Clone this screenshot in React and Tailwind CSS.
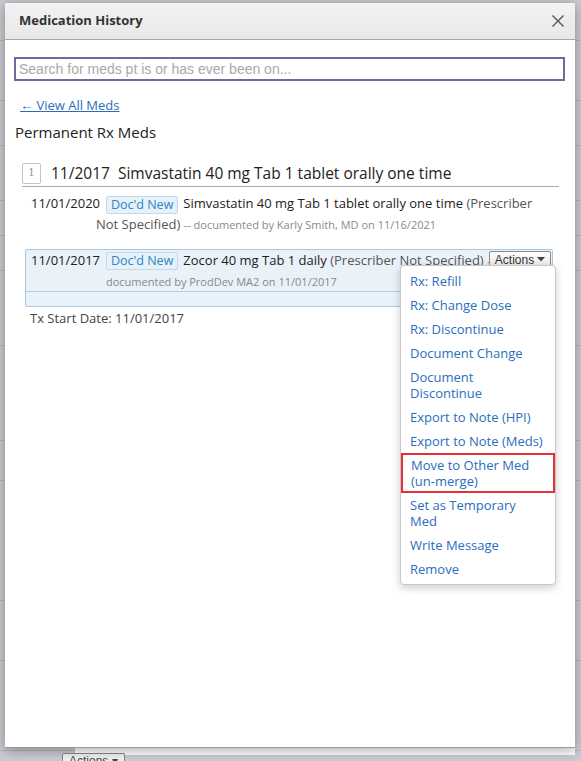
import React from 'react';

const menuItems = [
  'Rx: Refill',
  'Rx: Change Dose',
  'Rx: Discontinue',
  'Document Change',
  'Document Discontinue',
  'Export to Note (HPI)',
  'Export to Note (Meds)',
  'Move to Other Med (un-merge)',
  'Set as Temporary Med',
  'Write Message',
  'Remove',
];

// rows of the page behind the modal (only the edges show)
const bgRows = [38, 60, 45, 55, 35, 35, 75, 95, 40, 120, 60, 90];

const Badge = () => (
  <span className="inline-block align-middle leading-[16px] px-[4px] mr-[5px] text-[12.5px] text-[#2f86c0] bg-[#e6f1fa] border border-[#c3d9ea] rounded-[2px] indent-0">
    Doc&apos;d New
  </span>
);

export default function App() {
  return (
    <div className="relative w-full h-[761px] overflow-hidden bg-[#c9ccd2]" style={{ fontFamily: '"Open Sans", sans-serif' }}>
      {/* page behind the modal */}
      <div className="flex flex-col pt-[3px]">
        {bgRows.map((h, i) => (
          <div key={i} className="border-b border-[#b3b7be]" style={{ height: h }} />
        ))}
      </div>
      <div className="absolute left-[75px] top-[748px] w-[500px] h-[7px] bg-white" />
      <div className="absolute left-[62px] top-[753px] px-[6px] h-[8px] overflow-hidden text-[12px] leading-[14px] text-[#444] border border-b-0 border-[#888] rounded-t-[2px] bg-[#f2f2f2]" style={{ fontFamily: '"Liberation Sans", sans-serif' }}>
        Actions ▾
      </div>

      {/* modal */}
      <div className="absolute left-[5px] top-[3px] w-[570px] h-[745px] bg-white border-b border-[#999] shadow-[0_2px_12px_rgba(0,0,0,0.35)] flex flex-col">
        <div className="h-[37px] shrink-0 flex items-center justify-between px-[14px] bg-gradient-to-b from-[#f2f2f2] to-[#e8e8e8] border-b border-[#a8a8a8]">
          <span className="text-[13px] font-bold text-[#333]">Medication History</span>
          <svg width="14" height="14" viewBox="0 0 14 14" className="mr-[-4px]">
            <path d="M1.5 1.5 L12.5 12.5 M12.5 1.5 L1.5 12.5" stroke="#555" strokeWidth="1.4" />
          </svg>
        </div>

        <div className="flex flex-col pl-[9px] pr-[10px]">
          <div className="mt-[17px] h-[24px] border-2 border-[#6e6c98] flex items-center px-[3px]">
            <span className="text-[14px] text-[#a9a9a9]" style={{ fontFamily: '"Liberation Sans", sans-serif' }}>
              Search for meds pt is or has ever been on...
            </span>
          </div>

          <a className="mt-[15px] ml-[6px] text-[13px] leading-[18px] text-[#2a6ebb] underline self-start">
            ← View All Meds
          </a>

          <div className="mt-[8px] ml-[1px] text-[15px] leading-[20px] text-[#222]">Permanent Rx Meds</div>

          {/* med group */}
          <div className="mt-[20px] ml-[8px] mr-[6px] flex items-center gap-[10px] pb-[2px] border-b border-[#aaa]">
            <span className="w-[19px] h-[21px] flex items-center justify-center text-[11px] text-[#999] border border-[#c4c4c4] rounded-[2px]" style={{ fontFamily: '"DejaVu Serif", serif' }}>
              1
            </span>
            <span className="text-[15.5px] leading-[22px] text-[#222]">
              11/2017&nbsp;&nbsp;Simvastatin 40 mg Tab 1 tablet orally one time
            </span>
          </div>

          <div className="mt-[6px] ml-[82px] mr-[20px] -indent-[65px] text-[13px] leading-[20px] text-[#222]">
            <span className="mr-[6px]">11/01/2020</span>
            <Badge />
            Simvastatin 40 mg Tab 1 tablet orally one time <span className="text-[#555]">(Prescriber Not Specified)</span>{' '}
            <span className="text-[11px] text-[#8a8a8a]">-- documented by Karly Smith, MD on 11/16/2021</span>
          </div>

          {/* selected row */}
          <div className="relative mt-[14px] ml-[11px] mr-[12px] h-[58px] bg-[#e9f1f9] border border-[#a9c6e2] rounded-[2px]">
            <div className="h-[42px] border-b border-[#b5cde5] pl-[80px] pr-[30px] -indent-[75px] text-[13px] leading-[21px] text-[#222]">
              <span className="mr-[6px]">11/01/2017</span>
              <Badge />
              Zocor 40 mg Tab 1 daily <span className="text-[#555]">(Prescriber Not Specified)</span>{' '}
              <span className="text-[11px] text-[#8a8a8a]">-- documented by ProdDev MA2 on 11/01/2017</span>
            </div>
            <div className="absolute right-[1px] top-[1px] h-[18px] w-[62px] flex items-center justify-center gap-[3px] text-[12px] text-[#333] border border-[#8a8a8a] rounded-[2px] bg-gradient-to-b from-white to-[#e6e6e6]" style={{ fontFamily: '"Liberation Sans", sans-serif' }}>
              Actions
              <svg width="8" height="5" viewBox="0 0 8 5"><path d="M0 0 L8 0 L4 4.5 Z" fill="#444" /></svg>
            </div>

            {/* dropdown */}
            <div className="absolute left-[374px] top-[15px] w-[156px] z-10 py-[3px] bg-white border border-[#c8c8c8] rounded-[4px] shadow-[0_3px_8px_rgba(0,0,0,0.2)] indent-0">
              {menuItems.map((item) => (
                <div key={item} className="px-[2px]">
                  <div
                    className={
                      item.startsWith('Move')
                        ? 'pr-[8px] py-[2px] text-[13px] leading-[16px] text-[#2a6ebb] border-2 border-[#e53238] -mx-[2px] pl-[8px]'
                        : 'pl-[7px] pr-[8px] py-[4px] text-[13px] leading-[16px] text-[#2a6ebb]'
                    }
                  >
                    {item}
                  </div>
                </div>
              ))}
            </div>
          </div>

          <div className="mt-[1px] ml-[16px] text-[13px] leading-[20px] text-[#444]">Tx Start Date: 11/01/2017</div>
        </div>
      </div>
    </div>
  );
}
